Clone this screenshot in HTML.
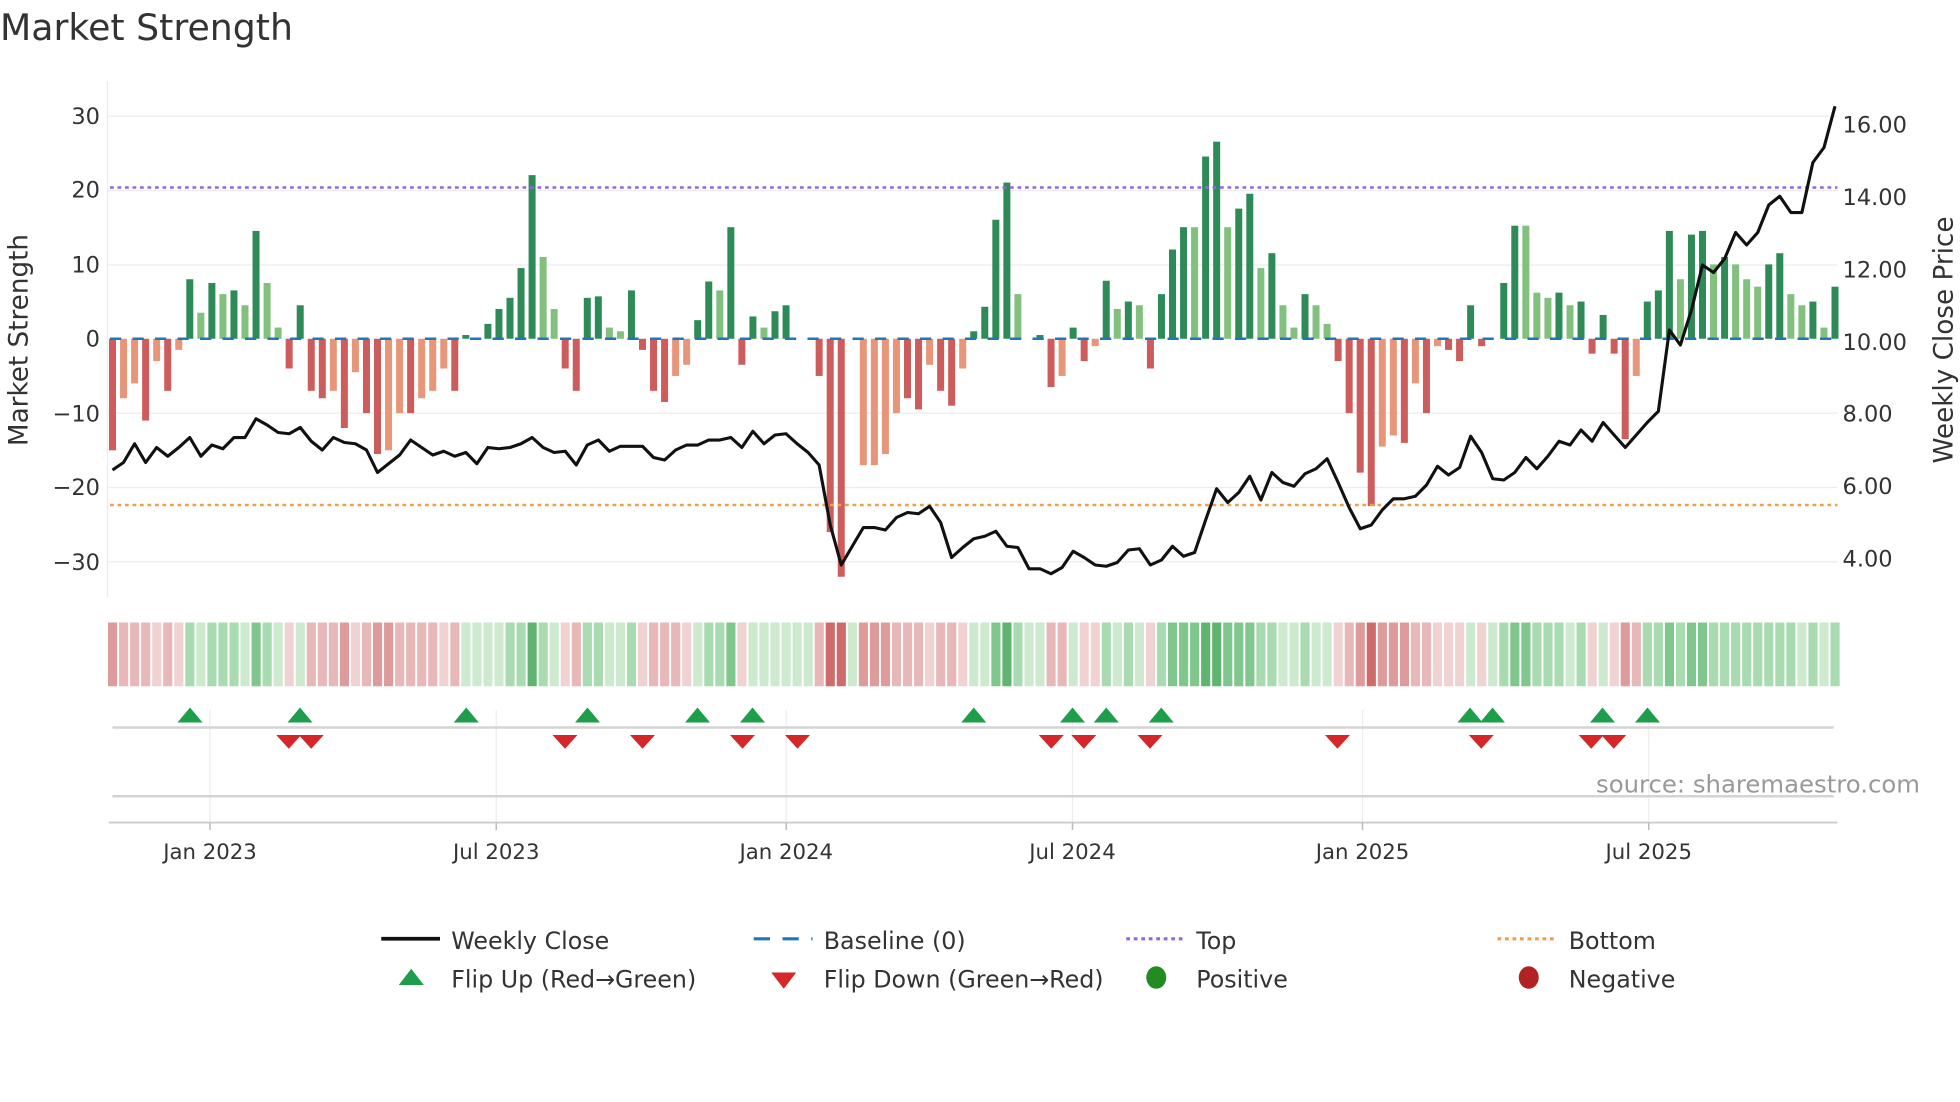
<!DOCTYPE html>
<html><head><meta charset="utf-8">
<style>
html,body{margin:0;padding:0;background:#fff;}
svg{display:block;font-family:"DejaVu Sans","Liberation Sans",sans-serif;}
</style></head>
<body>
<svg id="c" width="1960" height="1102" viewBox="0 0 1568 881.6" xmlns="http://www.w3.org/2000/svg">
<rect width="1568" height="882" fill="#fff"/>
<text x="0" y="32" font-size="29" fill="#333">Market Strength</text>
<g id="grid" stroke="#ececec" stroke-width="1">
<line x1="86" y1="93" x2="1470" y2="93"/><line x1="86" y1="152.5" x2="1470" y2="152.5"/><line x1="86" y1="212" x2="1470" y2="212"/><line x1="86" y1="330.5" x2="1470" y2="330.5"/><line x1="86" y1="390" x2="1470" y2="390"/><line x1="86" y1="449.5" x2="1470" y2="449.5"/>
<line x1="86" y1="65" x2="86" y2="478"/>
</g>
<g font-size="18" fill="#333" text-anchor="end">
<text x="80" y="99">30</text><text x="80" y="158">20</text><text x="80" y="218">10</text><text x="80" y="277">0</text><text x="80" y="337">−10</text><text x="80" y="396">−20</text><text x="80" y="456">−30</text>
</g>
<g font-size="18" fill="#333">
<text x="1474" y="106">16.00</text><text x="1474" y="164">14.00</text><text x="1474" y="222">12.00</text><text x="1474" y="280">10.00</text><text x="1474" y="337">8.00</text><text x="1474" y="395">6.00</text><text x="1474" y="453">4.00</text>
</g>
<text transform="translate(22,272) rotate(-90)" font-size="21" fill="#333" text-anchor="middle">Market Strength</text>
<text transform="translate(1562,272) rotate(-90)" font-size="21" fill="#333" text-anchor="middle">Weekly Close Price</text>
<g id="bars"></g>
<line x1="88" y1="271" x2="1470" y2="271" stroke="#1f77b4" stroke-width="2" stroke-dasharray="9,9"/>
<line x1="88" y1="150" x2="1470" y2="150" stroke="#9467dd" stroke-width="2" stroke-dasharray="3,3"/>
<line x1="88" y1="404" x2="1470" y2="404" stroke="#f0a04b" stroke-width="2" stroke-dasharray="3,3"/>
<polyline id="price" fill="none" stroke="#111" stroke-width="2.5" stroke-linejoin="round"/>
<g id="strip"></g>
<g stroke="#eee" stroke-width="1">
<line x1="168" y1="568" x2="168" y2="658"/><line x1="397" y1="568" x2="397" y2="658"/><line x1="629" y1="568" x2="629" y2="658"/><line x1="858" y1="568" x2="858" y2="658"/><line x1="1090" y1="568" x2="1090" y2="658"/><line x1="1319" y1="568" x2="1319" y2="658"/>
</g>
<line x1="90" y1="582" x2="1467" y2="582" stroke="#d4d4d4" stroke-width="2"/>
<line x1="90" y1="637" x2="1467" y2="637" stroke="#d4d4d4" stroke-width="2"/>
<line x1="87" y1="658" x2="1470" y2="658" stroke="#ccc" stroke-width="1.5"/>
<g stroke="#bbb" stroke-width="1.2">
<line x1="168" y1="658" x2="168" y2="664"/><line x1="397" y1="658" x2="397" y2="664"/><line x1="629" y1="658" x2="629" y2="664"/><line x1="858" y1="658" x2="858" y2="664"/><line x1="1090" y1="658" x2="1090" y2="664"/><line x1="1319" y1="658" x2="1319" y2="664"/>
</g>
<g id="marks"></g>
<text x="1536" y="634" font-size="19.5" fill="#999" text-anchor="end">source: sharemaestro.com</text>
<g font-size="17" fill="#333" text-anchor="middle">
<text x="168" y="687">Jan 2023</text><text x="397" y="687">Jul 2023</text><text x="629" y="687">Jan 2024</text><text x="858" y="687">Jul 2024</text><text x="1090" y="687">Jan 2025</text><text x="1319" y="687">Jul 2025</text>
</g>
<g font-size="19" fill="#333">
<line x1="305" y1="751" x2="352" y2="751" stroke="#111" stroke-width="3"/>
<text x="361" y="759">Weekly Close</text>
<line x1="603" y1="751" x2="650" y2="751" stroke="#1f77b4" stroke-width="2.5" stroke-dasharray="13,10"/>
<text x="659" y="759">Baseline (0)</text>
<line x1="901" y1="751" x2="948" y2="751" stroke="#9467dd" stroke-width="2.5" stroke-dasharray="3,3"/>
<text x="957" y="759">Top</text>
<line x1="1198" y1="751" x2="1245" y2="751" stroke="#f0a04b" stroke-width="2.5" stroke-dasharray="3,3"/>
<text x="1255" y="759">Bottom</text>
<polygon points="319,788 329,775 339,788" fill="#1e9e4a"/>
<text x="361" y="790">Flip Up (Red→Green)</text>
<polygon points="617,778 637,778 627,791" fill="#d62728"/>
<text x="659" y="790">Flip Down (Green→Red)</text>
<ellipse cx="925" cy="782" rx="8" ry="9" fill="#228b22"/>
<text x="957" y="790">Positive</text>
<ellipse cx="1223" cy="782" rx="8" ry="9" fill="#b22222"/>
<text x="1255" y="790">Negative</text>
</g>
</svg>
<script>
var V=[[-15,1],[-8,0],[-6,0],[-11,1],[-3,0],[-7,1],[-1.5,0],[8,1],[3.5,0],[7.5,1],[6,0],[6.5,1],[4.5,0],[14.5,1],[7.5,0],[1.5,0],[-4,1],[4.5,1],[-7,1],[-8,1],[-7,0],[-12,1],[-4.5,0],[-10,1],[-15.5,1],[-15,0],[-10,0],[-10,1],[-8,0],[-7,0],[-4,0],[-7,1],[0.5,1],[0,0],[2,1],[4,1],[5.5,1],[9.5,1],[22,1],[11,0],[4,0],[-4,1],[-7,1],[5.5,1],[5.7,1],[1.5,0],[1,0],[6.5,1],[-1.5,1],[-7,1],[-8.5,1],[-5,0],[-3.5,0],[2.5,1],[7.7,1],[6.5,0],[15,1],[-3.5,1],[3,1],[1.5,0],[3.7,1],[4.5,1],[0,0],[0,0],[-5,1],[-26,1],[-32,1],[0,0],[-17,0],[-17,0],[-15.5,0],[-10,0],[-8,1],[-9.5,1],[-3.5,0],[-7,1],[-9,1],[-4,0],[1,1],[4.3,1],[16,1],[21,1],[6,0],[0,0],[0.5,1],[-6.5,1],[-5,0],[1.5,1],[-3,1],[-1,0],[7.8,1],[4,0],[5,1],[4.5,0],[-4,1],[6,1],[12,1],[15,1],[15,0],[24.5,1],[26.5,1],[15,0],[17.5,1],[19.5,1],[9.5,0],[11.5,1],[4.5,0],[1.5,0],[6,1],[4.5,0],[2,0],[-3,1],[-10,1],[-18,1],[-22.5,1],[-14.5,0],[-13,0],[-14,1],[-6,0],[-10,1],[-1,0],[-1.5,1],[-3,1],[4.5,1],[-1,1],[0,0],[7.5,1],[15.2,1],[15.2,0],[6.2,0],[5.5,0],[6.2,1],[4.5,0],[5,1],[-2,1],[3.2,1],[-2,1],[-13.5,1],[-5,0],[5,1],[6.5,1],[14.5,1],[8,0],[14,1],[14.5,1],[10,0],[11,1],[10,0],[8,0],[7,0],[10,1],[11.5,1],[6,0],[4.5,0],[5,1],[1.5,0],[7,1]];
var NS="http://www.w3.org/2000/svg",bars=document.getElementById('bars'),strip=document.getElementById('strip');
function el(p,t,a){var e=document.createElementNS(NS,t);for(var k in a)e.setAttribute(k,a[k]);p.appendChild(e);return e;}
var n=V.length,x0=90,dx=(1468-90)/(n-1);
V.forEach(function(d,i){var v=d[0],x=x0+dx*i;
 if(v!==0){var y=271-v*5.95;var c=v>0?(d[1]?'#2e8b57':'#82c07e'):(d[1]?'#cd5c5c':'#e8967a');
 el(bars,'rect',{x:x-2.8,y:Math.min(y,271),width:5.6,height:Math.abs(271-y),fill:c});}
 var a=Math.abs(v),col;
 if(v>=0){col=a<5?'#cdeacf':a<12?'#a8dbb0':a<20?'#7fc78c':'#5fb46f';}
 else{col=a<5?'#f0d2d3':a<12?'#e8b8b8':a<20?'#dd9b9b':'#cf6b6b';}
 el(strip,'rect',{x:x-3.6,y:498,width:7.3,height:51,fill:col});
});
var P=[376,370,355,370,358,365,358,350,365,356,359,350,350,335,340,346,347,342,353,360,350,354,355,360,378,371,364,352,358,364,361,365,362,371,358,359,358,355,350,358,362,361,372,356,352,361,357,357,357,366,368,360,356,356,352,352,350,358,345,355,348,347,355,362,372,420,452,437,422,422,424,414,410,411,405,418,446,438,431,429,425,437,438,455,455,459,454,441,446,452,453,450,440,439,452,448,437,445,442,416,391,402,394,381,400,378,386,389,379,375,367,386,406,423,420,408,399,399,397,388,373,380,374,349,362,383,384,378,366,375,365,353,356,344,353,338,348,358,348,338,329,264,276,248,212,218,207,186,196,186,164,157,170,170,130,118,85];
var pts=P.map(function(y,i){return (x0+dx*i).toFixed(1)+','+y;}).join(' ');
document.getElementById('price').setAttribute('points',pts);
var m=document.getElementById('marks');
[152,240,373,470,558,602,779,858,885,929,1176,1194,1282,1318].forEach(function(x){el(m,'polygon',{points:(x-10)+',578 '+x+',566 '+(x+10)+',578',fill:'#1e9e4a'});});
[231,249,452,514,594,638,841,867,920,1070,1185,1273,1291].forEach(function(x){el(m,'polygon',{points:(x-10)+',588 '+(x+10)+',588 '+x+',599',fill:'#d62728'});});
</script>
</body></html>
